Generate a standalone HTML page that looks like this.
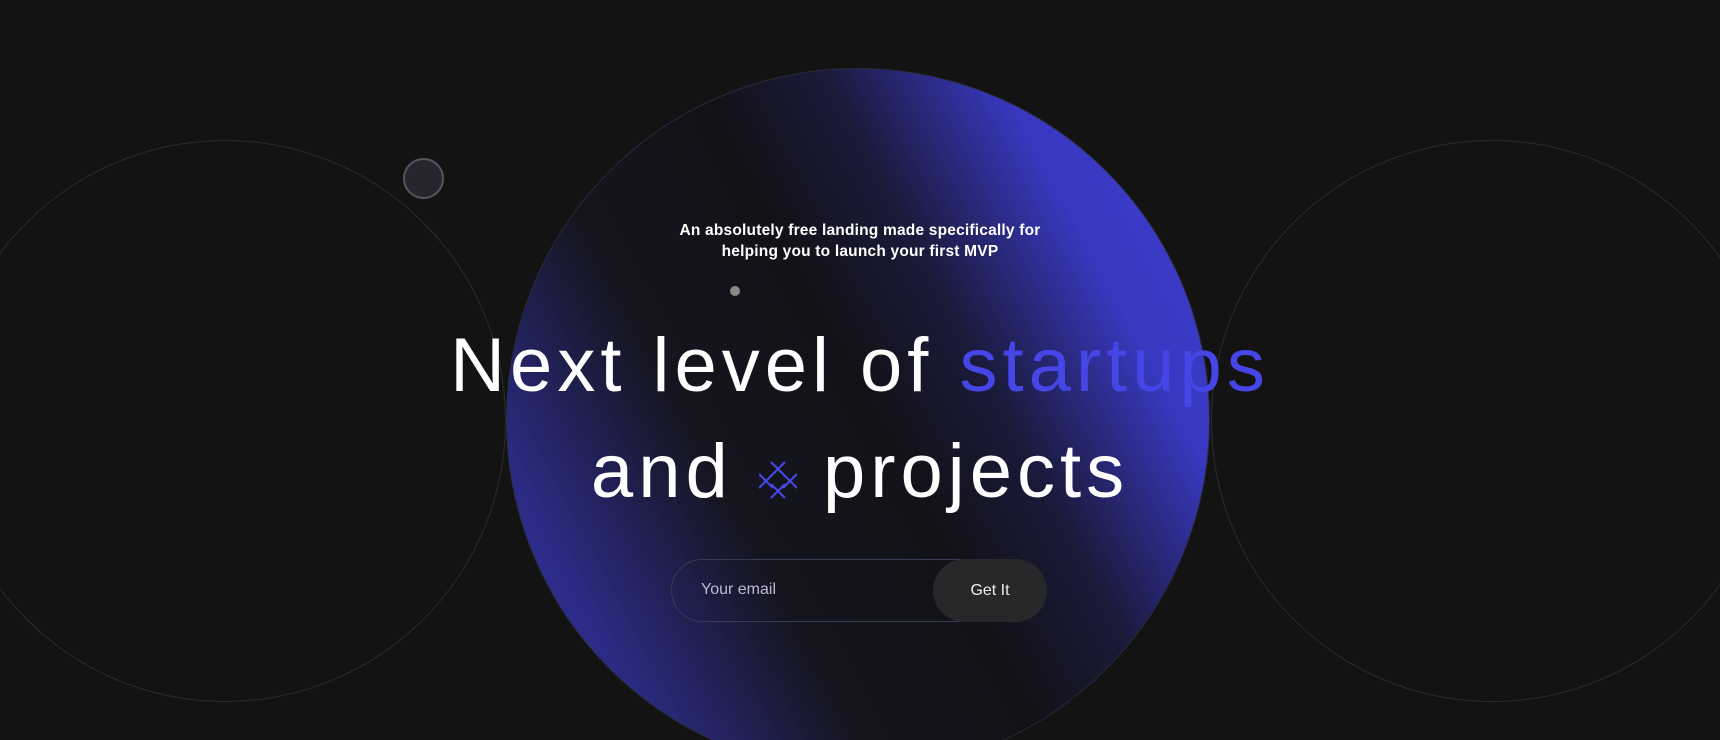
<!DOCTYPE html>
<html style="overflow:hidden;width:1720px;height:740px"><head><style>
*{margin:0;padding:0;box-sizing:border-box}
body{width:1720px;height:740px;background:#131313;overflow:hidden;position:relative;font-family:"Liberation Sans",sans-serif;color:#fff}
#w{position:absolute;left:0;top:0;width:1720px;height:740px;overflow:hidden}
.c{position:absolute;border-radius:50%}
.side{border:1px solid #2c2c2c;width:562px;height:562px}
.big{left:506px;top:68px;width:704px;height:704px;border:1px solid #2a2a3a;background:linear-gradient(62deg,#3a3ac4 0%,#2a2a80 16%,#15151f 34%,#121218 52%,#1a1a3a 64%,#3838c0 80%,#3d3dd4 100%)}
.sub{position:absolute;left:0;width:1720px;top:220px;text-align:center;font-size:15.5px;line-height:21px;font-weight:bold;letter-spacing:0.2px}
h1{position:absolute;left:0;width:1720px;top:313px;text-align:center;font-weight:normal;font-size:76px;line-height:106px;letter-spacing:5px}
h1 span{color:#4646e6}
.form{position:absolute;left:671px;top:559px;width:375px;height:63px;border:1px solid #3a3a55;border-radius:32px}
.form .ph{position:absolute;left:29px;top:21px;font-size:16px;color:#bdbad6}
.btn{position:absolute;left:261px;top:-1px;width:114px;height:63px;border-radius:32px;background:#28282b;text-align:center;line-height:63px;font-size:16px;color:#eee}
</style></head><body><div id="w">
<div class="c side" style="left:-56px;top:140px"></div>
<div class="c side" style="left:1211px;top:140px"></div>
<div class="c big"></div>
<div class="c" style="left:403px;top:158px;width:41px;height:41px;border:2px solid #55555e;background:#26262e"></div>
<div class="c" style="left:730px;top:286px;width:10px;height:10px;background:#8a8a8a"></div>
<div class="sub">An absolutely free landing made specifically for<br>helping you to launch your first MVP</div>
<h1>Next level of <span>startups</span><br>and <svg width="38" height="38" viewBox="0 0 38 38" style="vertical-align:-2px"><g stroke="#4646e6" stroke-width="2.2" fill="none"><path d="M12 1l14 14M26 1L12 15M0 13l14 14M14 13L0 27M24 13l14 14M38 13L24 27M12 23l14 14M26 23L12 37"/></g></svg> projects</h1>
<div class="form"><div class="ph">Your email</div><div class="btn">Get It</div></div>
</div></body></html>
